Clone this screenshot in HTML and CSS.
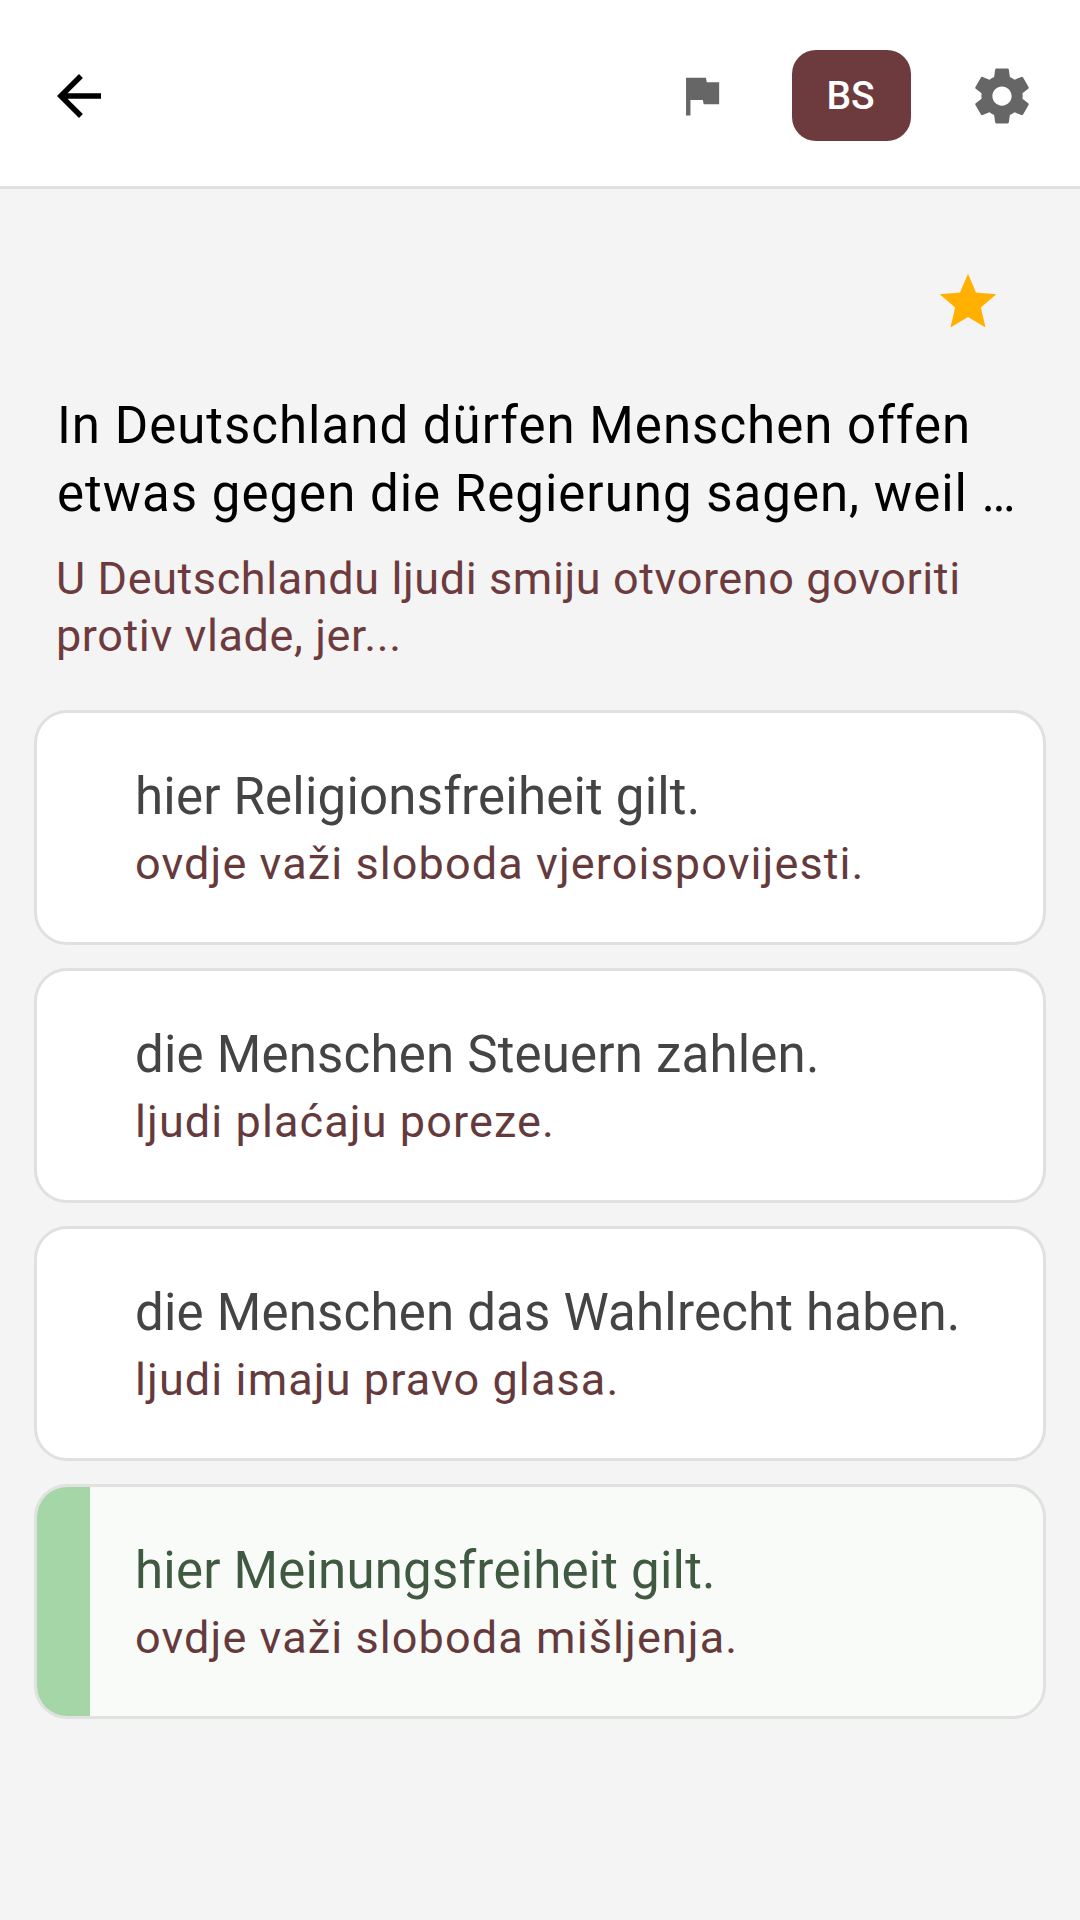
FILE: index.html
```
<!DOCTYPE html>
<html>
<head>
    <title>Frage</title>
    <link rel="stylesheet" href="styles.css">
</head>
<body>
    <div class="topbar">
        <svg class="icon-back" viewBox="0 0 24 24"><path d="M20 11H7.83l5.59-5.59L12 4l-8 8 8 8 1.41-1.41L7.83 13H20v-2z"/></svg>
        <div class="topbar-right">
            <svg class="icon-flag" viewBox="0 0 24 24"><path d="M14.4 6L14 4H5v17h2v-7h5.6l.4 2h7V6z"/></svg>
            <div class="lang-button">BS</div>
            <svg class="icon-gear" viewBox="0 0 24 24"><path d="M19.43 12.98c.04-.32.07-.64.07-.98s-.03-.66-.07-.98l2.11-1.65c.19-.15.24-.42.12-.64l-2-3.46c-.12-.22-.39-.3-.61-.22l-2.49 1c-.52-.4-1.08-.73-1.69-.98l-.38-2.65C14.46 2.18 14.25 2 14 2h-4c-.25 0-.46.18-.49.42l-.38 2.65c-.61.25-1.17.59-1.69.98l-2.49-1c-.23-.09-.49 0-.61.22l-2 3.46c-.13.22-.07.49.12.64l2.11 1.65c-.04.32-.07.65-.07.98s.03.66.07.98l-2.11 1.65c-.19.15-.24.42-.12.64l2 3.46c.12.22.39.3.61.22l2.49-1c.52.4 1.08.73 1.69.98l.38 2.65c.03.24.24.42.49.42h4c.25 0 .46-.18.49-.42l.38-2.65c.61-.25 1.17-.59 1.69-.98l2.49 1c.23.09.49 0 .61-.22l2-3.46c.12-.22.07-.49-.12-.64l-2.11-1.65zM12 15.5c-1.93 0-3.5-1.57-3.5-3.5s1.57-3.5 3.5-3.5 3.5 1.57 3.5 3.5-1.57 3.5-3.5 3.5z"/></svg>
        </div>
    </div>

    <div class="content">
        <div class="star-row">
            <svg class="icon-star" viewBox="0 0 24 24"><path d="M12 17.27L18.18 21l-1.64-7.03L22 9.24l-7.19-.61L12 2 9.19 8.63 2 9.24l5.46 4.73L5.82 21z"/></svg>
        </div>

        <div class="question">In Deutschland dürfen Menschen offen etwas gegen die Regierung sagen, weil …</div>
        <div class="question-translation">U Deutschlandu ljudi smiju otvoreno govoriti protiv vlade, jer...</div>

        <div class="answers">
            <div class="answer">
                <div class="answer-bar"></div>
                <div class="answer-text">
                    <div class="answer-main">hier Religionsfreiheit gilt.</div>
                    <div class="answer-translation">ovdje važi sloboda vjeroispovijesti.</div>
                </div>
            </div>
            <div class="answer">
                <div class="answer-bar"></div>
                <div class="answer-text">
                    <div class="answer-main">die Menschen Steuern zahlen.</div>
                    <div class="answer-translation">ljudi plaćaju poreze.</div>
                </div>
            </div>
            <div class="answer">
                <div class="answer-bar"></div>
                <div class="answer-text">
                    <div class="answer-main">die Menschen das Wahlrecht haben.</div>
                    <div class="answer-translation">ljudi imaju pravo glasa.</div>
                </div>
            </div>
            <div class="answer correct">
                <div class="answer-bar"></div>
                <div class="answer-text">
                    <div class="answer-main">hier Meinungsfreiheit gilt.</div>
                    <div class="answer-translation">ovdje važi sloboda mišljenja.</div>
                </div>
            </div>
        </div>
    </div>
</body>
</html>
```

FILE: styles.css
```
body {
    margin: 0;
    min-height: 1920px;
    background: #f4f4f4;
    font-family: Roboto, "Noto Sans", sans-serif;
}

/* top bar */
.topbar {
    display: flex;
    align-items: center;
    justify-content: space-between;
    box-sizing: border-box;
    height: 189px;
    padding: 5px 45px 0 46px;
    background: #fff;
    border-bottom: 3px solid #e0e0e0;
}
.topbar-right {
    display: flex;
    align-items: center;
}
.icon-back {
    width: 66px;
    height: 66px;
    fill: #000;
}
.icon-flag {
    width: 53px;
    height: 53px;
    fill: #666;
}
.icon-gear {
    width: 66px;
    height: 66px;
    margin-left: 58px;
    fill: #666;
}
.lang-button {
    display: flex;
    align-items: center;
    justify-content: center;
    box-sizing: border-box;
    width: 119px;
    height: 91px;
    margin-left: 64px;
    padding-right: 2px;
    border-radius: 24px;
    background: #6d3b3d;
    color: #fff;
    font-size: 39px;
    font-weight: 500;
}

/* question */
.content {
    padding: 0 34px;
}
.star-row {
    display: flex;
    justify-content: flex-end;
    padding: 79px 44px 0 0;
}
.icon-star {
    width: 68px;
    height: 68px;
    fill: #ffb000;
}
.question {
    margin: 56px 0 0 23px;
    font-size: 51px;
    line-height: 68px;
    letter-spacing: 1px;
    color: #000;
}
.question-translation {
    margin: 22px 0 0 22px;
    font-size: 45px;
    line-height: 57px;
    letter-spacing: 0.6px;
    color: #6d3b3d;
}

/* answer cards */
.answers {
    display: flex;
    flex-direction: column;
    gap: 23px;
    margin-top: 46px;
}
.answer {
    display: flex;
    box-sizing: border-box;
    height: 235px;
    overflow: hidden;
    background: #fff;
    border: 3px solid #e0e0e0;
    border-radius: 33px;
}
.answer-bar {
    flex: none;
    width: 53px;
}
.answer-text {
    align-self: center;
    padding-left: 45px;
}
.answer-main {
    padding-top: 1px;
    font-size: 51px;
    line-height: 68px;
    letter-spacing: 0.2px;
    color: #444;
}
.answer-translation {
    margin-top: 3px;
    font-size: 45px;
    line-height: 60px;
    letter-spacing: 1.1px;
    color: #653a3c;
}
.correct {
    background: #f9fbf8;
    border-color: #dfe2df;
}
.correct .answer-bar {
    background: #a5d6a7;
}
.correct .answer-main {
    color: #3f5a40;
}
```
